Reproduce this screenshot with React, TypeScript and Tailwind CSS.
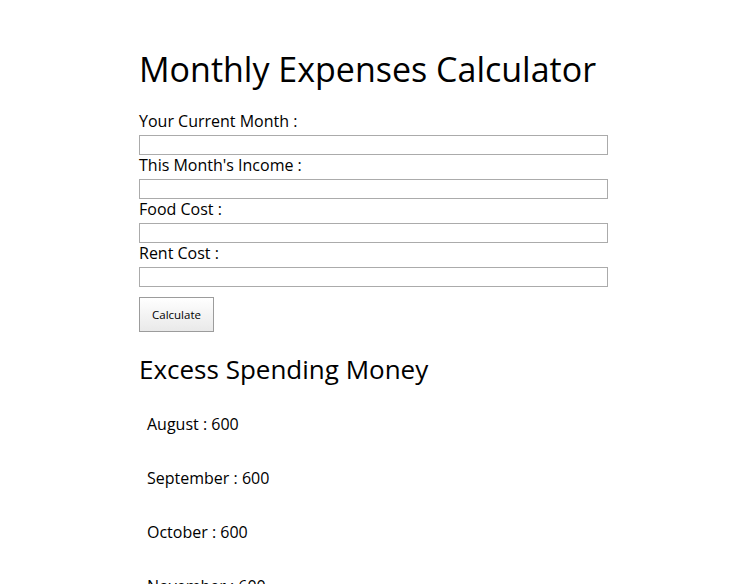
const fields = ['Your Current Month :', "This Month's Income :", 'Food Cost :', 'Rent Cost :']

const months = ['August', 'September', 'October', 'November']

export default function App() {
  return (
    <div className="h-screen overflow-hidden bg-white font-['Open_Sans',sans-serif] text-black">
      <div className="ml-[139px] w-[469px] pt-[44px]">
        <h1 className="whitespace-nowrap text-[34px] leading-[50px]">Monthly Expenses Calculator</h1>

        <form className="mt-[17px]" onSubmit={(e) => e.preventDefault()}>
          {fields.map((label) => (
            <div key={label}>
              <label className="block h-[24px] text-[16px] leading-[20px]">{label}</label>
              <input
                type="text"
                className="block h-[20px] w-full border border-[#ababab] bg-white outline-none"
              />
            </div>
          ))}

          <button
            type="submit"
            className="mt-[10px] h-[35px] w-[75px] border border-[#9c9c9c] bg-gradient-to-b from-white to-[#e9e9e9] text-[11.5px]"
          >
            Calculate
          </button>
        </form>

        <h2 className="mt-[19px] whitespace-nowrap text-[26px] leading-[36px]">Excess Spending Money</h2>

        <ul className="mt-[25px] pl-[8px]">
          {months.map((m) => (
            <li key={m} className="mb-[30px] text-[16px] leading-[24px]">
              {m} : 600
            </li>
          ))}
        </ul>
      </div>
    </div>
  )
}
